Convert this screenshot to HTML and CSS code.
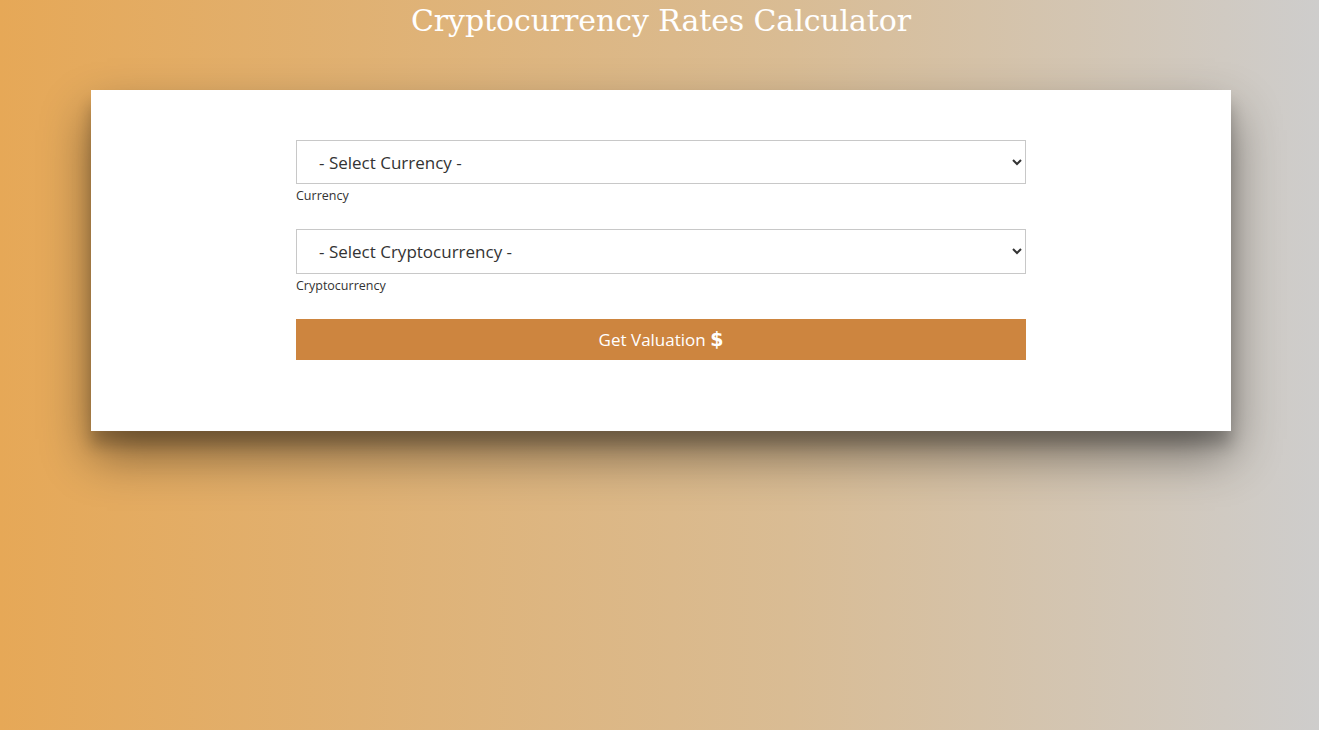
FILE: index.html
```html
<!DOCTYPE html>
<html lang="en">
<head>
<meta charset="utf-8">
<title>Cryptocurrency Rates Calculator</title>
<link rel="stylesheet" href="styles.css">
</head>
<body>
  <h1 class="title">Cryptocurrency Rates Calculator</h1>
  <main class="card">
    <form class="form">
      <div class="field">
        <select class="select">
          <option>- Select Currency -</option>
        </select>
        <label class="label">Currency</label>
      </div>
      <div class="field">
        <select class="select">
          <option>- Select Cryptocurrency -</option>
        </select>
        <label class="label">Cryptocurrency</label>
      </div>
      <button type="button" class="btn">Get Valuation <span class="dollar">$</span></button>
    </form>
  </main>
</body>
</html>
```
FILE: styles.css
```css
html, body {
  margin: 0;
  padding: 0;
  height: 100%;
}
body {
  background: linear-gradient(to right, #e6a857 0%, #d9bc94 60%, #cecdcc 100%);
  font-family: "Open Sans", "Noto Sans", sans-serif;
  min-height: 730px;
}
.title {
  margin: 0;
  padding-top: 0;
  padding-left: 3px;
  text-align: center;
  color: #fff;
  font-family: "DejaVu Serif", "Liberation Serif", serif;
  font-weight: 400;
  font-size: 30px;
  line-height: 42px;
  letter-spacing: -0.1px;
}
.card {
  width: 1140px;
  margin: 48px 0 0 91px;
  background: #fff;
  box-shadow: 0 24px 46px rgba(0,0,0,0.45), 0 14px 14px rgba(0,0,0,0.2);
  padding: 50px 0 71px;
  box-sizing: border-box;
}
.form {
  width: 730px;
  margin: 0 auto;
  display: flex;
  flex-direction: column;
}
.field {
  display: flex;
  flex-direction: column;
  margin-bottom: 23px;
}
.select {
  width: 100%;
  height: 44px;
  border: 1px solid #c8c8c8;
  border-radius: 0;
  background: #fff;
  color: #333;
  font-family: "Open Sans", "Noto Sans", sans-serif;
  font-size: 17px;
  padding: 0 6px 0 18px;
  margin: 0;
}
.label {
  font-size: 12.5px;
  color: #333;
  line-height: 20px;
  margin-top: 2px;
}
.field:nth-child(2) .select {
  height: 45px;
}
.btn {
  height: 41px;
  border: none;
  background: #cd853f;
  color: #fff;
  font-family: "Open Sans", "Noto Sans", sans-serif;
  font-size: 17px;
  padding: 0;
  cursor: pointer;
}
.dollar {
  font-weight: 700;
  font-size: 19px;
  font-family: "DejaVu Sans", sans-serif;
}
```
